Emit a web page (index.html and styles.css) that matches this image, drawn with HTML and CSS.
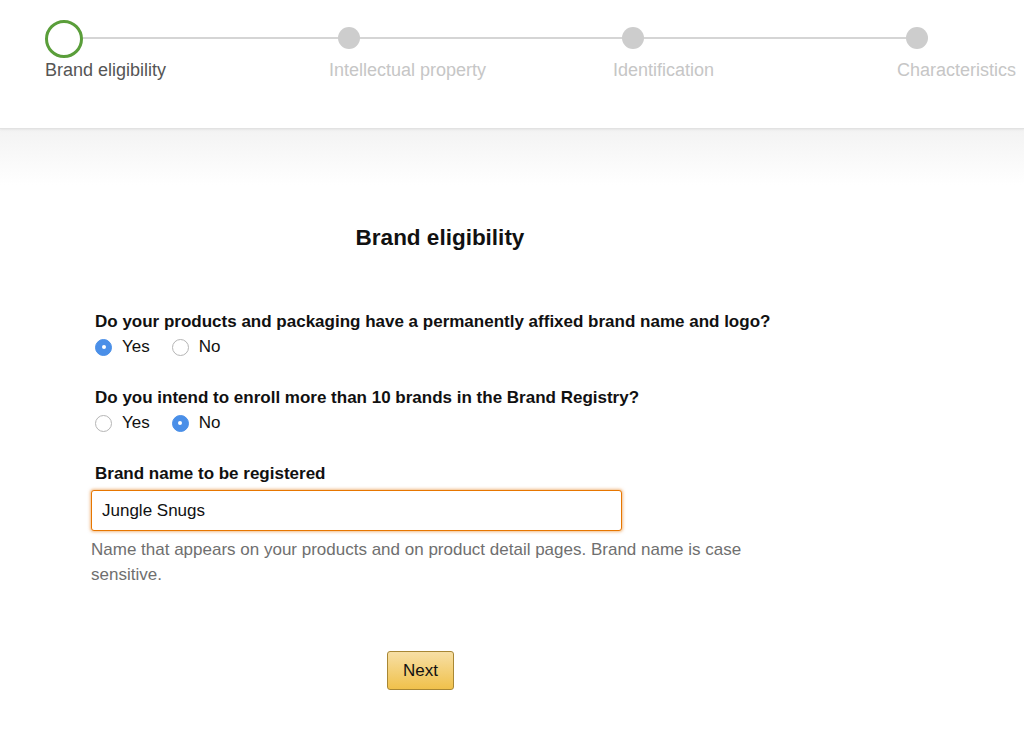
FILE: index.html
```html
<!DOCTYPE html>
<html lang="en">

<head>
  <meta charset="UTF-8" />
  <title>Brand Registry</title>
  <link rel="stylesheet" href="styles.css">
</head>

<body>
  <header class="stepper">
    <div class="track"></div>
    <div class="step current">
      <span class="dot"></span>
      <span class="step-label">Brand eligibility</span>
    </div>
    <div class="step">
      <span class="dot"></span>
      <span class="step-label">Intellectual property</span>
    </div>
    <div class="step">
      <span class="dot"></span>
      <span class="step-label">Identification</span>
    </div>
    <div class="step">
      <span class="dot"></span>
      <span class="step-label">Characteristics</span>
    </div>
  </header>
  <div class="fade"></div>

  <main class="form">
    <h1>Brand eligibility</h1>

    <div class="question first">
      <div class="q-title">Do your products and packaging have a permanently affixed brand name and logo?</div>
      <div class="options">
        <label class="option"><span class="radio checked"></span>Yes</label>
        <label class="option"><span class="radio"></span>No</label>
      </div>
    </div>

    <div class="question">
      <div class="q-title">Do you intend to enroll more than 10 brands in the Brand Registry?</div>
      <div class="options">
        <label class="option"><span class="radio"></span>Yes</label>
        <label class="option"><span class="radio checked"></span>No</label>
      </div>
    </div>

    <div class="question">
      <div class="q-title">Brand name to be registered</div>
      <input type="text" class="text-input" value="Jungle Snugs">
      <p class="help">Name that appears on your products and on product detail pages. Brand name is case sensitive.</p>
    </div>

    <button class="next">Next</button>
  </main>
</body>

</html>
```

FILE: styles.css
```css
body {
  margin: 0;
  font-family: "Liberation Sans", Arial, sans-serif;
  color: #111;
  background: #fff;
}

/* stepper */
.stepper {
  position: relative;
  display: flex;
  height: 129px;
  padding-left: 45px;
  box-sizing: border-box;
  background: #fff;
  border-bottom: 1px solid #e2e2e2;
  box-shadow: 0 1px 2px rgba(0, 0, 0, 0.06);
  overflow: hidden;
}

.track {
  position: absolute;
  left: 63px;
  width: 855px;
  top: 37px;
  height: 2px;
  background: #d5d5d5;
}

.step {
  position: relative;
  flex: 0 0 284px;
  display: flex;
  flex-direction: column;
}

.step .dot {
  width: 22px;
  height: 22px;
  margin: 27px 0 0 9px;
  border-radius: 50%;
  background: #cdcdcd;
}

.step.current .dot {
  width: 32px;
  height: 32px;
  margin: 20px 0 0 0;
  background: #fff;
  border: 3px solid #5a9e3a;
}

.step-label {
  margin-top: 11px;
  font-size: 18px;
  line-height: 21px;
  color: #c6c6c6;
  white-space: nowrap;
}

.step.current .step-label {
  margin-top: 2px;
  color: #555;
}

.fade {
  height: 56px;
  background: linear-gradient(#f3f3f3, #fff);
}

/* form */
.form {
  width: 696px;
  margin-left: 92px;
  padding-top: 39px;
}

h1 {
  margin: 0;
  text-align: center;
  font-size: 22.5px;
  line-height: 28px;
}

.question {
  margin-top: 27px;
}

.question.first {
  margin-top: 58px;
}

.q-title {
  font-size: 17px;
  font-weight: bold;
  line-height: 24px;
  margin-left: 3px;
}

.options {
  display: flex;
  gap: 22px;
  margin-top: 1px;
  margin-left: 3px;
}

.option {
  display: flex;
  align-items: center;
  gap: 10px;
  font-size: 17px;
  line-height: 24px;
}

.radio {
  width: 17px;
  height: 17px;
  border-radius: 50%;
  border: 1px solid #b5b5b5;
  box-sizing: border-box;
  background: #fff;
  position: relative;
}

.radio.checked {
  border-color: #4a8fe8;
  background: #4a8fe8;
}

.radio.checked::after {
  content: "";
  position: absolute;
  left: 5.5px;
  top: 5.5px;
  width: 4px;
  height: 4px;
  border-radius: 50%;
  background: #fff;
}

.text-input {
  display: block;
  width: 531px;
  height: 41px;
  margin-top: 4px;
  margin-left: -1px;
  padding: 0 10px;
  box-sizing: border-box;
  font-family: inherit;
  font-size: 17px;
  color: #111;
  border: 1px solid #e77600;
  border-radius: 3px;
  box-shadow: 0 0 3px 1px rgba(228, 121, 17, 0.5);
  outline: none;
}

.help {
  margin: 6px 0 0 -1px;
  font-size: 17px;
  line-height: 25px;
  color: #6f6f6f;
}

.next {
  display: block;
  margin: 64px 0 0 295px;
  width: 67px;
  height: 39px;
  font-family: inherit;
  font-size: 17px;
  color: #111;
  border: 1px solid #a88734;
  border-radius: 3px;
  background: linear-gradient(#f7dfa5, #f0c14b);
}
```
